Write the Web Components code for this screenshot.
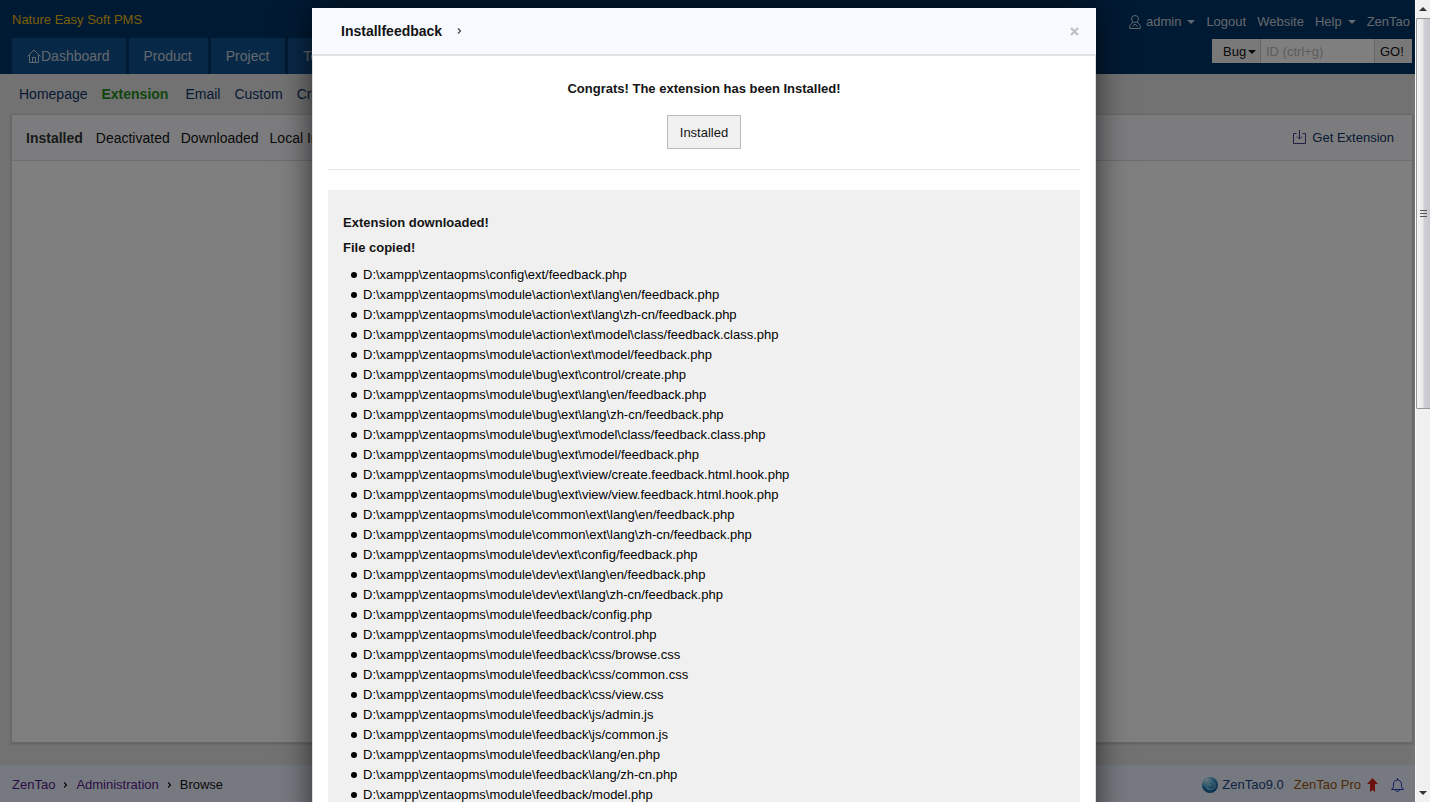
<!DOCTYPE html>
<html lang="en">
<head>
<meta charset="utf-8">
<title>Installfeedback</title>
<style>
html, body { height: 100%; margin: 0; overflow: hidden; }
body { font: 13px/20px "Liberation Sans", Arial, sans-serif; color: #141414; }
</style>
</head>
<body>
<zt-window>
  <zt-header></zt-header>
  <zt-submenu></zt-submenu>
  <zt-panel></zt-panel>
  <zt-footer></zt-footer>
  <zt-modal slot="dialog" heading="Installfeedback">
    <zt-result message="Congrats! The extension has been Installed!"></zt-result>
    <zt-filelog></zt-filelog>
  </zt-modal>
  <zt-scrollbar slot="scrollbar"></zt-scrollbar>
</zt-window>
<script>
function element(name, render) {
  customElements.define(name, class extends HTMLElement {
    connectedCallback() {
      if (this.shadowRoot) return;
      this.attachShadow({ mode: 'open' }).innerHTML = render(this);
    }
  });
}

element('zt-window', () => `
<style>
:host { display: flex; height: 100vh; overflow: hidden; }
main { flex: 1; min-width: 0; position: relative; display: flex; flex-direction: column; background: #e5e5e5; overflow: hidden; }
.backdrop { position: absolute; inset: 0; background: rgba(0,0,0,.5); display: flex; justify-content: center; align-items: flex-start; padding: 8px 7px 0 0; overflow: hidden; }
</style>
<main><slot></slot><div class="backdrop"><slot name="dialog"></slot></div></main>
<slot name="scrollbar"></slot>`);

element('zt-header', () => `
<style>
:host { display: flex; justify-content: space-between; height: 74px; background: #003467; color: #c6d0dc; padding: 0 3px 0 12px; }
a { color: inherit; text-decoration: none; white-space: nowrap; }
.left, .right { display: flex; flex-direction: column; justify-content: space-between; }
h1 { margin: 0; padding-top: 10px; font-size: 13px; line-height: 20px; font-weight: normal; color: #efbd0c; }
nav { display: flex; gap: 3px; }
nav a { display: flex; align-items: center; padding: 0 16px 0 15px; height: 36px; background: #11508f; font-size: 14px; }
.right { align-items: flex-end; padding-bottom: 11px; box-sizing: border-box; }
.user { display: flex; gap: 11px; padding: 12px 2px 0 0; line-height: 20px; }
.user a { display: flex; align-items: center; }
.caret { width: 0; border: 4px solid transparent; border-top-color: currentColor; border-bottom: 0; margin-left: 6px; }
form { display: flex; height: 24px; color: #111; }
button, input { font: inherit; line-height: 20px; margin: 0; border: 0; border-radius: 0; box-sizing: border-box; height: 24px; background: #f0f0f0; color: inherit; white-space: nowrap; }
button { padding: 2px 5px 0; }
.type { width: 48px; display: flex; align-items: center; padding: 2px 4px 0 11px; }
.type .caret { margin-left: 2px; }
input { width: 115px; background: #fff; border: solid #ccc; border-width: 0 1px; padding: 0 5px; }
input::placeholder { color: #b8b8b8; opacity: 1; }
.go { width: 37px; text-align: left; }
</style>
<div class="left"><h1>Nature Easy Soft PMS</h1>
<nav><a href="#"><svg width="14" height="14" viewBox="0 0 14 14" fill="none" stroke="currentColor"><path d="M.5 7.500 7 1l6.500 6.500M2.500 6v7.500h9V6M5.500 13.500v-5h3v5"/></svg>Dashboard</a><a href="#">Product</a><a href="#">Project</a><a href="#">Test</a></nav></div>
<div class="right"><div class="user">
<a href="#"><svg width="12" height="14" viewBox="0 0 12 14" fill="none" stroke="currentColor" style="margin-right:5px"><circle cx="6" cy="4" r="3.500"/><path d="M4 7 .8 10.500v3h10.400v-3L8 7M3.500 11.500 6 9l2.500 2.500"/></svg>admin<i class="caret"></i></a>
<a href="#">Logout</a><a href="#">Website</a><a href="#">Help<i class="caret"></i></a><a href="#">ZenTao</a></div>
<form><button type="button" class="type">Bug<i class="caret"></i></button><input type="text" placeholder="ID (ctrl+g)" aria-label="ID"><button type="button" class="go">GO!</button></form></div>`);

element('zt-submenu', () => `
<style>
:host { display: flex; gap: 14px; height: 40px; padding: 0 19px; align-items: center; font-size: 14px; }
a { color: #0e3368; text-decoration: none; white-space: nowrap; }
a.on { color: #248c1c; font-weight: bold; margin-right: 3px; }
</style>
<a href="#">Homepage</a><a href="#" class="on">Extension</a><a href="#">Email</a><a href="#">Custom</a><a href="#">Cron</a>`);

element('zt-panel', () => `
<style>
:host { flex: 1; display: block; margin: 0 2px 21px 11px; background: #fff; border: 1px solid #d0d0d0; box-shadow: 0 1px 2px rgba(0,0,0,.2); }
header { display: flex; align-items: center; gap: 11px; height: 45px; padding: 0 18px 0 14px; background: #f8f9fd; border-bottom: 1px solid #ddd; font-size: 14px; }
a { color: #141414; text-decoration: none; white-space: nowrap; }
.on { font-weight: bold; color: #333; margin-right: 2px; }
.get { display: flex; gap: 5px; align-items: center; margin-left: auto; color: #0e3368; font-size: 13px; }
</style>
<header><a href="#" class="on">Installed</a><a href="#">Deactivated</a><a href="#">Downloaded</a><a href="#">Local Install</a>
<a href="#" class="get"><svg width="15" height="15" viewBox="0 0 15 15" fill="none" stroke="#4b3d8c"><path d="M4.500 3.500h-3v10h12v-10h-3M7.500 0v9M5 6.500 7.500 9 10 6.500"/></svg>Get Extension</a></header>`);

element('zt-footer', () => `
<style>
:host { display: flex; justify-content: space-between; align-items: center; height: 38px; padding: 2px 11px 0 12px; background: #edf3fe; border-top: 1px solid #e2e6ee; box-sizing: border-box; }
div { display: flex; align-items: center; }
a { color: #551a8b; text-decoration: none; white-space: nowrap; }
.crumbs { gap: 8px; }
.info a { display: flex; align-items: center; }
.pro { color: #9c5508; margin: 0 13px 0 10px; }
</style>
<div class="crumbs"><a href="#">ZenTao</a><svg width="5" height="8" viewBox="0 0 5 8" fill="none" stroke="#222" stroke-width="1.300"><path d="M1 1.500 3.500 4 1 6.500"/></svg><a href="#">Administration</a><svg width="5" height="8" viewBox="0 0 5 8" fill="none" stroke="#222" stroke-width="1.300"><path d="M1 1.500 3.500 4 1 6.500"/></svg><span>Browse</span></div>
<div class="info"><a href="#" style="color:#1c4585"><svg width="16" height="16" viewBox="0 0 16 16" style="margin-right:4px"><defs><radialGradient id="g" cx=".3" cy=".2" r=".9"><stop offset="0" stop-color="#d8f4ff"/><stop offset=".4" stop-color="#54afd8"/><stop offset="1" stop-color="#08528e"/></radialGradient></defs><circle cx="8" cy="8" r="8" fill="url(#g)"/><path d="M1 6c5-3 12-2 12 3 0 4-7 5-8 1 0-3 5-3 5-1" fill="none" stroke="#8fd0e8" stroke-width="1.200" opacity=".8"/><path d="M1 9c1 5 8 7 12 3" fill="none" stroke="#1a6ea8" stroke-width="1.500"/></svg>ZenTao9.0</a>
<a href="#" class="pro">ZenTao Pro<svg width="11" height="14" viewBox="0 0 11 14" style="margin-left:6px"><path d="M5.500 0 11 6H8v8l-2.500-2L3 14V6H0z" fill="#d9241c"/></svg></a>
<a href="#" aria-label="Notifications"><svg width="13" height="14" viewBox="0 0 13 14" fill="none" stroke="#2b3cc4"><path d="M.5 11.500h12L10.500 9V6c0-2-1.500-4-4-4s-4 2-4 4v3zM6.500 0v2M4.500 12c.5 2 3.500 2 4 0"/></svg></a></div>`);

element('zt-modal', el => `
<style>
:host { display: block; width: 784px; max-width: 100%; background: #fff; box-shadow: 0 0 30px rgba(0,0,0,.65); }
header { display: flex; align-items: center; height: 46px; padding: 0 16px 0 29px; background: #f8f9fe; border-bottom: 2px solid #e2e2e2; }
h2 { margin: 0 15px 0 0; font-size: 14px; line-height: 20px; }
button { margin-left: auto; width: 12px; padding: 0; border: 0; background: none; height: 20px; display: flex; align-items: center; justify-content: center; }
.body { padding: 23px 15px 0; border: solid #ddd; border-width: 0 1px; }
</style>
<header><h2>${el.getAttribute('heading')}</h2><svg width="5" height="8" viewBox="0 0 5 8" fill="none" stroke="#444" stroke-width="1.200"><path d="M1 1.500 3.500 4 1 6.500"/></svg><button type="button" aria-label="Close"><svg width="9" height="9" viewBox="0 0 9 9" stroke="#bfc0c4" stroke-width="2.200"><path d="M1 1l7 7M8 1 1 8"/></svg></button></header>
<div class="body"><slot></slot></div>`);

element('zt-result', el => `
<style>
:host { display: flex; flex-direction: column; align-items: center; border-bottom: 1px solid #e5e5e5; padding-bottom: 20px; }
h3 { margin: 0 0 16px; font-size: 13px; line-height: 20px; }
button { font: inherit; color: inherit; width: 74px; height: 34px; padding: 2px 0 0; background: #f0f0f0; border: 1px solid #bbb; }
</style>
<h3>${el.getAttribute('message')}</h3><button type="button">Installed</button>`);

const root = 'D:\\xampp\\zentaopms\\';
const files = String.raw`config\ext/feedback.php
module\action\ext\lang\en/feedback.php
module\action\ext\lang\zh-cn/feedback.php
module\action\ext\model\class/feedback.class.php
module\action\ext\model/feedback.php
module\bug\ext\control/create.php
module\bug\ext\lang\en/feedback.php
module\bug\ext\lang\zh-cn/feedback.php
module\bug\ext\model\class/feedback.class.php
module\bug\ext\model/feedback.php
module\bug\ext\view/create.feedback.html.hook.php
module\bug\ext\view/view.feedback.html.hook.php
module\common\ext\lang\en/feedback.php
module\common\ext\lang\zh-cn/feedback.php
module\dev\ext\config/feedback.php
module\dev\ext\lang\en/feedback.php
module\dev\ext\lang\zh-cn/feedback.php
module\feedback/config.php
module\feedback/control.php
module\feedback\css/browse.css
module\feedback\css/common.css
module\feedback\css/view.css
module\feedback\js/admin.js
module\feedback\js/common.js
module\feedback\lang/en.php
module\feedback\lang/zh-cn.php
module\feedback/model.php`.split('\n');

element('zt-filelog', () => `
<style>
:host { display: block; margin-top: 20px; padding: 23px 15px 20px; background: #f0f0f0; }
h4 { margin: 0 0 5px; font-size: 13px; line-height: 20px; }
ul { list-style: none; margin: 0; padding: 2px 0 0 8px; color: #000; }
li { display: flex; align-items: center; gap: 6px; line-height: 20px; }
li::before { content: ""; width: 6px; height: 6px; border-radius: 50%; background: #000; }
</style>
<h4>Extension downloaded!</h4><h4>File copied!</h4>
<ul>${files.map(f => `<li>${root}${f}</li>`).join('')}</ul>`);

element('zt-scrollbar', () => `
<style>
:host { flex: 0 0 15px; display: flex; flex-direction: column; background: #f0f0f0; box-sizing: border-box; border-left: 1px solid #fafafa; }
.arrow { height: 18px; display: flex; align-items: center; justify-content: center; }
.thumb { flex: 27 1 0; box-sizing: border-box; border: 1px solid #979797; border-right: 0; border-radius: 2px 0 0 2px; background: linear-gradient(90deg, #f6f6f6, #e8e8eb 45%, #cfcfd5 55%, #c6c6ce); display: flex; align-items: center; justify-content: center; }
.rest { flex: 26 1 0; }
</style>
<div class="arrow"><svg width="8" height="4"><path d="M4 0 8 4H0z" fill="#333"/></svg></div>
<div class="thumb"><svg width="7" height="9" stroke="#555"><path d="M0 1.500h7M0 4.500h7M0 7.500h7"/></svg></div>
<div class="rest"></div>
<div class="arrow"><svg width="8" height="4"><path d="M0 0h8L4 4z" fill="#333"/></svg></div>`);
</script>
</body>
</html>
